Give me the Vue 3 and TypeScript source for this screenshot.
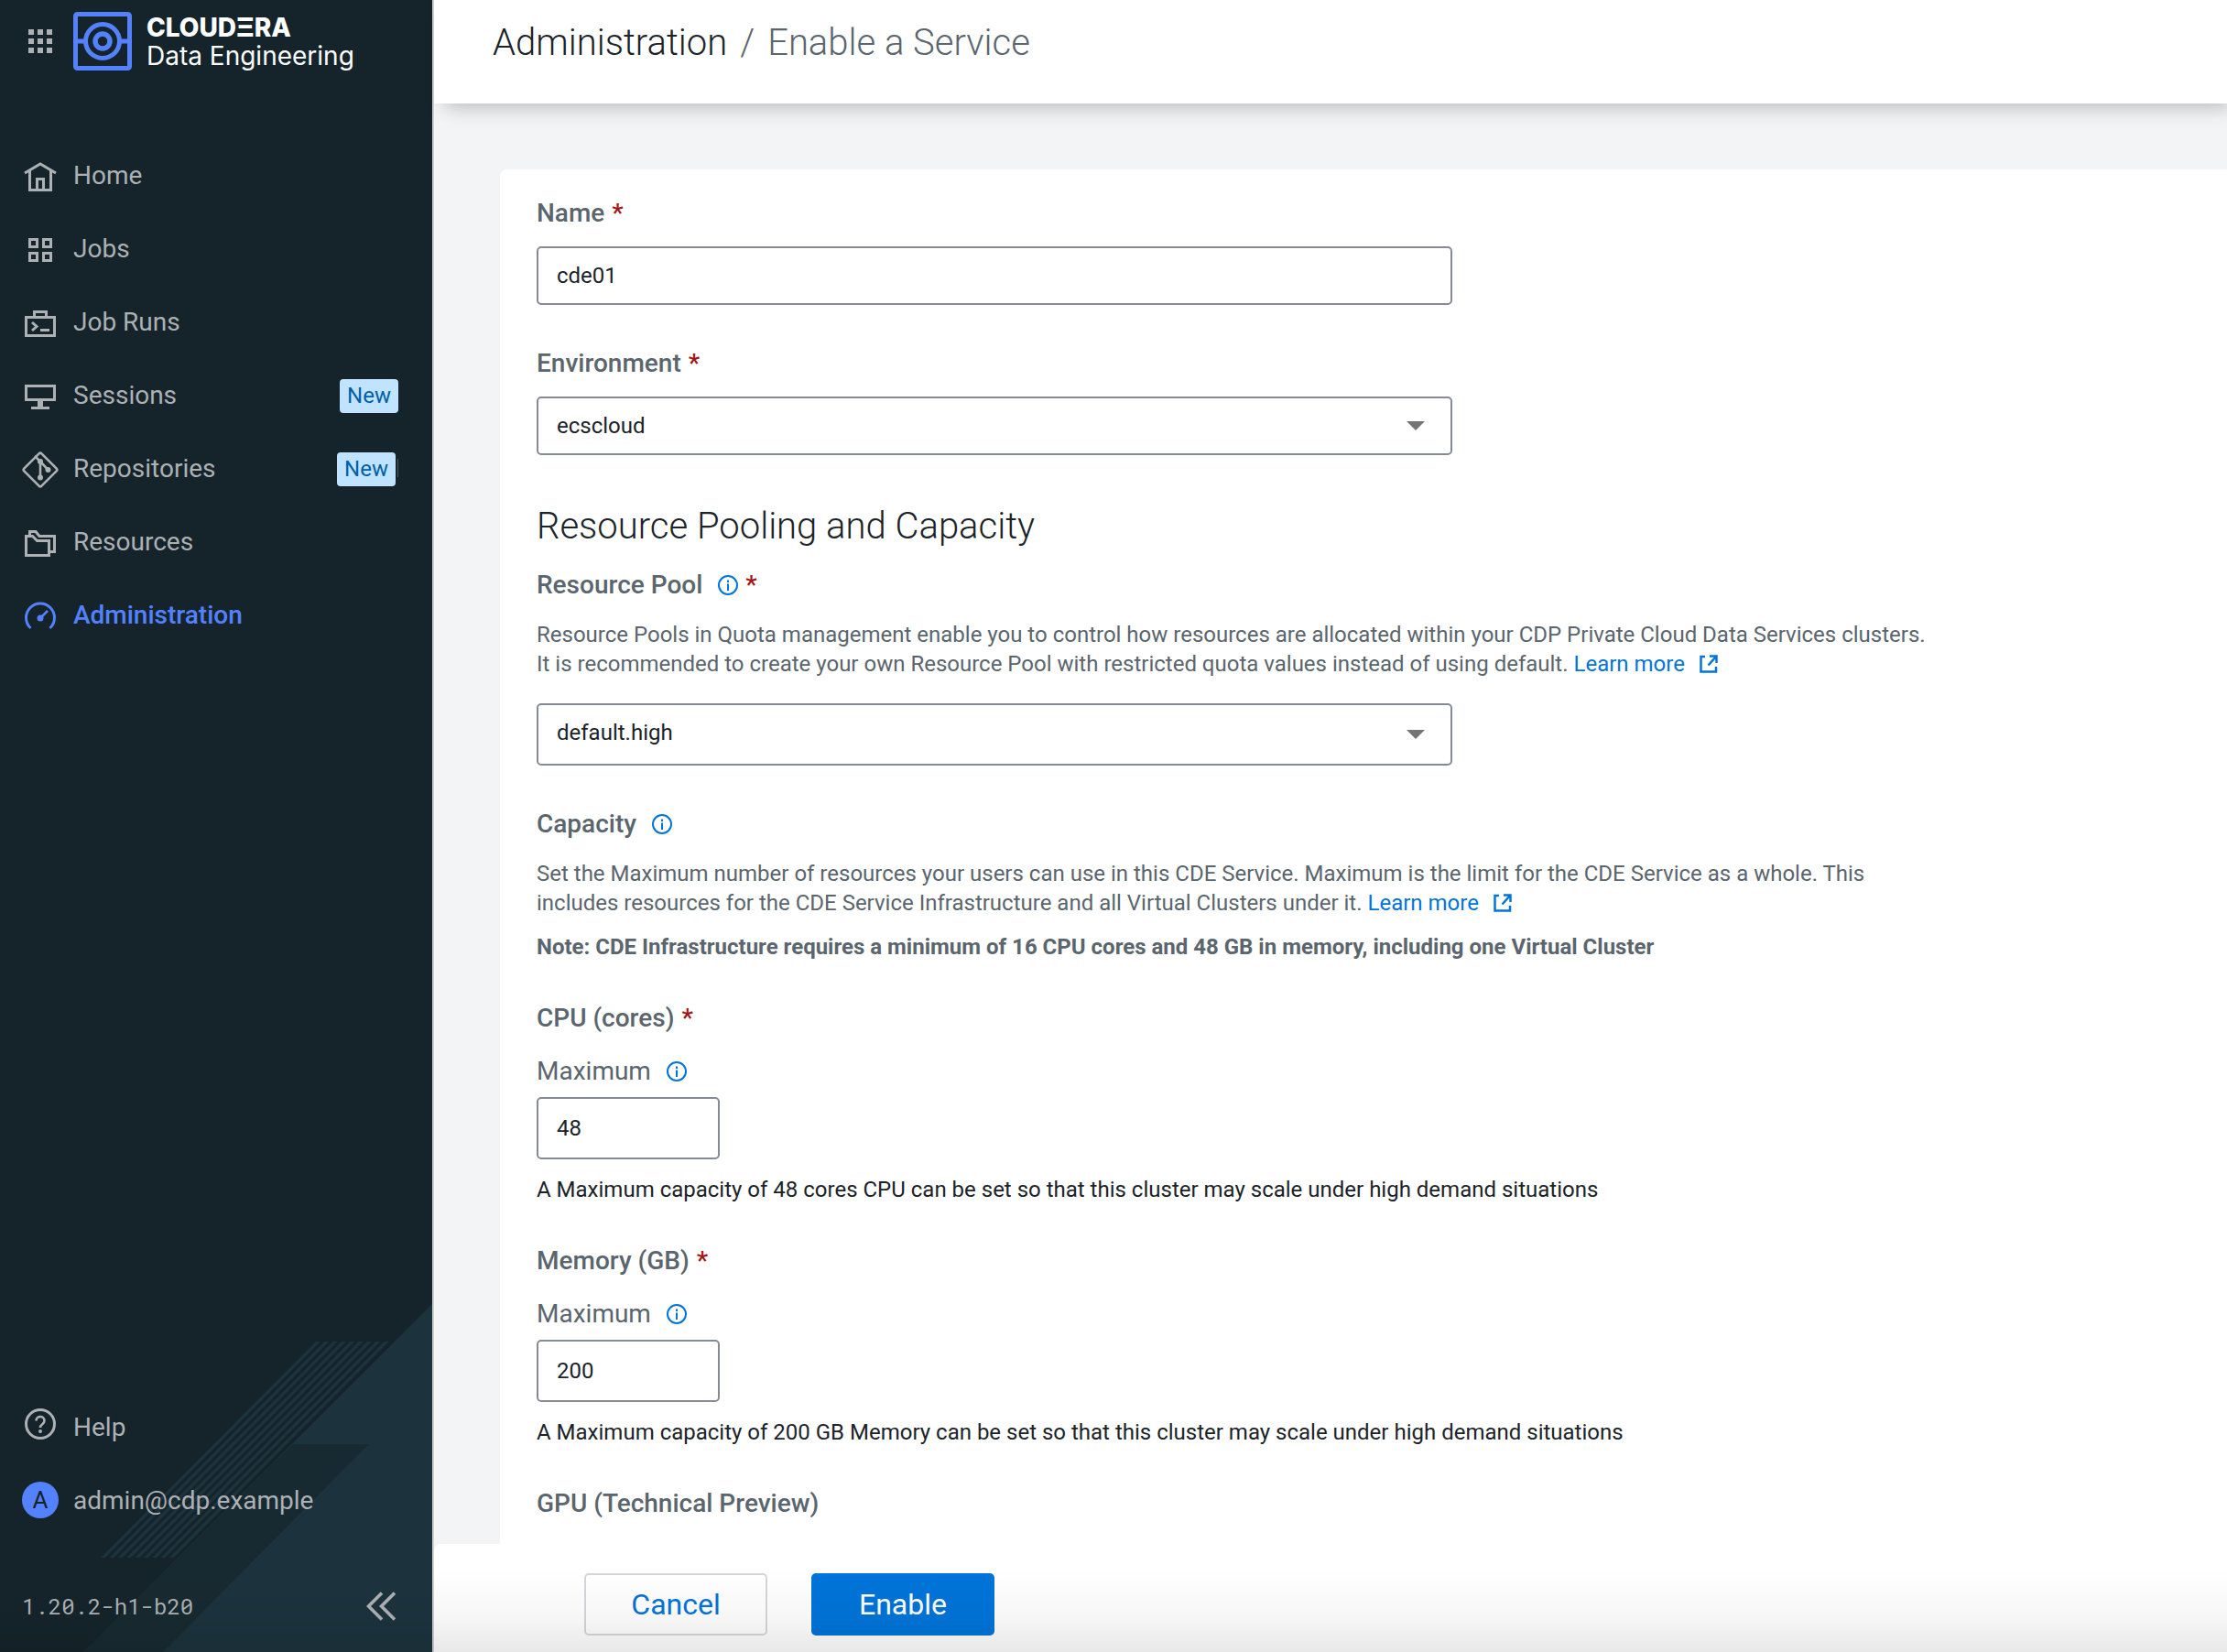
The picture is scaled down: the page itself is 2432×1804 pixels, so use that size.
<script setup lang="ts">
import { ref } from 'vue'

interface NavItem {
  label: string
  icon: string
  active?: boolean
  badge?: string
  marker?: boolean
}

const navItems: NavItem[] = [
  { label: 'Home', icon: 'home' },
  { label: 'Jobs', icon: 'jobs' },
  { label: 'Job Runs', icon: 'runs' },
  { label: 'Sessions', icon: 'sessions', badge: 'New' },
  { label: 'Repositories', icon: 'repos', badge: 'New', marker: true },
  { label: 'Resources', icon: 'resources' },
  { label: 'Administration', icon: 'admin', active: true },
]

const stripes = Array.from({ length: 9 }, (_, i) => {
  const top = 345 + (i * 28) / 3
  const bottom = top - 235
  return `${top},45 ${top + 5},45 ${bottom + 5},281 ${bottom},281`
})

const serviceName = ref('cde01')
const environment = ref('ecscloud')
const pool = ref('default.high')
const cpu = ref('48')
const memory = ref('200')
</script>

<template>
  <div class="shell">
    <aside class="sidebar">
      <svg class="backdrop" viewBox="0 0 472 384" aria-hidden="true">
        <polygon points="472,4 472,384 91,384" fill="#1c333d" />
        <polygon points="320,157 403,157 178,384 91,384" fill="#182a31" />
        <polygon v-for="s in stripes" :key="s" :points="s" fill="#1c333d" />
      </svg>

      <div class="brand">
        <button class="apps" type="button" aria-label="Applications">
          <svg width="40" height="40" viewBox="0 0 40 40" fill="#adb1b4">
            <path d="M7 7h6v6H7zM17 7h6v6h-6zM27 7h6v6h-6zM7 17h6v6H7zM17 17h6v6h-6zM27 17h6v6h-6zM7 27h6v6H7zM17 27h6v6h-6zM27 27h6v6h-6z" />
          </svg>
        </button>
        <svg class="logo" width="64" height="64" viewBox="0 0 64 64" fill="none" stroke="#5482ff" stroke-width="5">
          <rect x="2.5" y="2.5" width="59" height="59" rx="2" />
          <circle cx="32" cy="32" r="18.5" />
          <circle cx="32" cy="32" r="8" stroke-width="5.5" />
          <path d="M4 32h10M50 32h10" />
        </svg>
        <div class="brand-text">
          <span class="company">CLOUDΞRA</span>
          <span class="product">Data Engineering</span>
        </div>
      </div>

      <nav class="nav">
        <a v-for="item in navItems" :key="item.label" href="#" class="nav-item" :class="{ active: item.active }">
          <svg class="icon" width="40" height="44" viewBox="0 0 40 44" fill="none" stroke="currentColor" stroke-width="3">
            <template v-if="item.icon === 'home'">
              <path d="M3 20 20 10 37 20M8.500 17v21.500h23V17" />
              <path d="M16.500 38V26.500h7V38" />
            </template>
            <template v-else-if="item.icon === 'jobs'">
              <path d="M8.500 12.500h8v8h-8zM23.500 12.500h8v8h-8zM8.500 27.500h8v8h-8zM23.500 27.500h8v8h-8z" />
            </template>
            <template v-else-if="item.icon === 'runs'">
              <path d="M4.500 17.500h31v20h-31zM13.500 17v-5.500h13V17" />
              <path d="M11 23l5 4.500-5 4.500M20 31.500h10" />
            </template>
            <template v-else-if="item.icon === 'sessions'">
              <path d="M4.500 12.500h31v15h-31zM10 36.500h20" />
              <path d="M20 28v8" stroke-width="6" />
            </template>
            <template v-else-if="item.icon === 'repos'">
              <rect x="6.500" y="10.500" width="27" height="27" rx="2" transform="rotate(45 20 24)" stroke-width="2.600" />
              <path d="M14 9l6 6v18M20 15l8.500 9" stroke-width="2.600" />
              <circle cx="20" cy="15" r="3" fill="currentColor" stroke="none" />
              <circle cx="20" cy="32.500" r="3" fill="currentColor" stroke="none" />
              <circle cx="28.500" cy="24" r="3" fill="currentColor" stroke="none" />
            </template>
            <template v-else-if="item.icon === 'resources'">
              <path d="M4.500 16.500h7l5 5h13v16h-25z" />
              <path d="M8.500 17v-5.500h6.500l4 5h16.500v17h-5" />
            </template>
            <template v-else>
              <path d="M9.500 37a15.500 15.500 0 1 1 21 0" />
              <path d="M20 26l8-8" stroke-width="2.500" />
              <circle cx="20" cy="26" r="3.500" fill="currentColor" stroke="none" />
            </template>
          </svg>
          <span class="nav-label">{{ item.label }}</span>
          <span v-if="item.badge" class="badge">{{ item.badge }}</span>
          <span v-if="item.marker" class="marker"></span>
        </a>
      </nav>

      <div class="sidebar-foot">
        <a href="#" class="nav-item">
          <svg class="icon" width="40" height="44" viewBox="0 0 40 44" fill="none" stroke="currentColor" stroke-width="3">
            <circle cx="20" cy="19" r="15.500" />
            <path d="M15.500 15.500c0-6 9-6 9 0 0 4-4.500 3.500-4.500 7.500" stroke-width="2.600" />
            <circle cx="20" cy="27" r="2" fill="currentColor" stroke="none" />
          </svg>
          <span class="nav-label">Help</span>
        </a>
        <a href="#" class="nav-item">
          <span class="avatar">A</span>
          <span class="nav-label">admin@cdp.example</span>
        </a>
        <div class="version-row">
          <span class="version">1.20.2-h1-b20</span>
          <button class="collapse" type="button" aria-label="Collapse menu">
            <svg width="32" height="32" viewBox="0 0 32 32" fill="none" stroke="currentColor" stroke-width="3.600">
              <path d="M17 1.500 2.500 16 17 30.500M31 1.500 16.500 16 31 30.500" />
            </svg>
          </button>
        </div>
      </div>
    </aside>

    <div class="page">
      <header class="topbar">
        <nav class="crumbs" aria-label="Breadcrumb">
          <a href="#">Administration</a>
          <span>/</span>
          <span>Enable a Service</span>
        </nav>
      </header>

      <main class="content">
        <form id="service-form" class="card" @submit.prevent>
          <label class="label" for="name">Name <b class="req">*</b></label>
          <input id="name" v-model="serviceName" class="control" type="text" />

          <label class="label section" for="environment">Environment <b class="req">*</b></label>
          <div class="select">
            <select id="environment" v-model="environment" class="control">
              <option>ecscloud</option>
            </select>
            <svg class="arrow" width="20" height="10" viewBox="0 0 20 10"><path d="M0 0h20L10 10z" fill="#757575" /></svg>
          </div>

          <h2 class="heading">Resource Pooling and Capacity</h2>

          <label class="label" for="pool">
            Resource Pool
            <svg class="info" width="22" height="22" viewBox="0 0 22 22"><circle cx="11" cy="11" r="10" /><path d="M11 9.500V17M11 5.500V8" /></svg>
            <b class="req">*</b>
          </label>
          <p class="text">
            Resource Pools in Quota management enable you to control how resources are allocated within your CDP Private Cloud Data Services clusters.
            It is recommended to create your own Resource Pool with restricted quota values instead of using default.
            <a href="#" class="more">Learn more<svg class="ext" width="20" height="20" viewBox="0 0 20 20"><path d="M6 2H1.500v16.500H18V13M11 1.500h7.500V9M18 2 9.500 11.500" /></svg></a>
          </p>
          <div class="select pool">
            <select id="pool" v-model="pool" class="control tall">
              <option>default.high</option>
            </select>
            <svg class="arrow" width="20" height="10" viewBox="0 0 20 10"><path d="M0 0h20L10 10z" fill="#757575" /></svg>
          </div>

          <h3 class="label section">
            Capacity
            <svg class="info" width="22" height="22" viewBox="0 0 22 22"><circle cx="11" cy="11" r="10" /><path d="M11 9.500V17M11 5.500V8" /></svg>
          </h3>
          <p class="text">
            Set the Maximum number of resources your users can use in this CDE Service. Maximum is the limit for the CDE Service as a whole. This
            includes resources for the CDE Service Infrastructure and all Virtual Clusters under it.
            <a href="#" class="more">Learn more<svg class="ext" width="20" height="20" viewBox="0 0 20 20"><path d="M6 2H1.500v16.500H18V13M11 1.500h7.500V9M18 2 9.500 11.500" /></svg></a>
          </p>
          <p class="note">Note: CDE Infrastructure requires a minimum of 16 CPU cores and 48 GB in memory, including one Virtual Cluster</p>

          <h3 class="label next">CPU (cores) <b class="req">*</b></h3>
          <label class="label sub" for="cpu">
            Maximum
            <svg class="info" width="22" height="22" viewBox="0 0 22 22"><circle cx="11" cy="11" r="10" /><path d="M11 9.500V17M11 5.500V8" /></svg>
          </label>
          <input id="cpu" v-model="cpu" class="control tall small" type="text" />
          <p class="hint">A Maximum capacity of 48 cores CPU can be set so that this cluster may scale under high demand situations</p>

          <h3 class="label next">Memory (GB) <b class="req">*</b></h3>
          <label class="label sub" for="memory">
            Maximum
            <svg class="info" width="22" height="22" viewBox="0 0 22 22"><circle cx="11" cy="11" r="10" /><path d="M11 9.500V17M11 5.500V8" /></svg>
          </label>
          <input id="memory" v-model="memory" class="control tall small" type="text" />
          <p class="hint">A Maximum capacity of 200 GB Memory can be set so that this cluster may scale under high demand situations</p>

          <h3 class="label next">GPU (Technical Preview)</h3>
        </form>
      </main>

      <footer class="actions">
        <button type="button" class="btn">Cancel</button>
        <button type="submit" form="service-form" class="btn primary">Enable</button>
      </footer>
    </div>
    <div class="fade" aria-hidden="true"></div>
  </div>
</template>

<style>
body {
  margin: 0;
  background: #f3f4f6;
}
</style>

<style scoped>
.shell {
  position: relative;
  display: flex;
  height: 100vh;
  overflow: hidden;
  font-family: Roboto, "Liberation Sans", sans-serif;
  font-size: 24px;
  line-height: 32px;
  color: #1b2329;
}
.shell * {
  box-sizing: border-box;
}
a {
  color: inherit;
  text-decoration: none;
}
button {
  padding: 0;
  border: 0;
  background: none;
  font: inherit;
  color: inherit;
  cursor: pointer;
}
svg {
  flex: none;
}

/* Sidebar */
.sidebar {
  position: relative;
  flex: none;
  display: flex;
  flex-direction: column;
  width: 474px;
  border-right: 2px solid #cdd0d1;
  background: #15242b;
  color: #adb1b4;
}
.backdrop {
  position: absolute;
  left: 0;
  bottom: 0;
  width: 100%;
}
.brand {
  position: relative;
  display: flex;
  align-items: center;
  gap: 16px;
  height: 90px;
  padding-left: 24px;
}
.apps {
  height: 40px;
}
.brand-text {
  display: flex;
  flex-direction: column;
  color: #fff;
  font-family: Inter, sans-serif;
  font-size: 28px;
  white-space: nowrap;
}
.company {
  font-weight: 800;
  line-height: 32px;
}
.product {
  line-height: 30px;
}
.nav {
  position: relative;
  margin-top: 61px;
}
.nav-item {
  display: flex;
  align-items: center;
  gap: 16px;
  height: 80px;
  padding: 0 37px 0 24px;
  font-size: 28px;
}
.nav-item.active {
  color: #5482ff;
  font-weight: 500;
}
.nav-label {
  flex: 1;
  padding-top: 2px;
}
.badge {
  margin-top: 2px;
  padding: 0 8px;
  border-radius: 4px;
  background: #c0e3ff;
  color: #005fa8;
  font-size: 24px;
  line-height: 37px;
}
.marker {
  width: 1px;
  height: 20px;
  margin-left: -14px;
  background: #4a565c;
}
.sidebar-foot {
  position: relative;
  margin-top: auto;
}
.avatar {
  width: 40px;
  height: 40px;
  border-radius: 50%;
  background: #5482ff;
  color: #15242b;
  font-size: 26px;
  line-height: 40px;
  text-align: center;
}
.version-row {
  display: flex;
  align-items: center;
  justify-content: space-between;
  height: 100px;
  margin-top: 26px;
  padding: 0 40px 0 24px;
}
.version {
  font-family: "Roboto Mono", "Liberation Mono", monospace;
}
.collapse {
  height: 32px;
}

/* Page */
.page {
  flex: 1;
  display: flex;
  flex-direction: column;
  min-width: 0;
  background: #f3f4f6;
}
.topbar {
  position: relative;
  flex: none;
  height: 113px;
  padding: 23px 64px;
  background: #fff;
  box-shadow: 8px 8px 20px -4px rgba(0, 0, 0, 0.24);
}
.crumbs {
  display: flex;
  gap: 14px;
  font-size: 40px;
  font-weight: 300;
  line-height: 48px;
  color: #5a656d;
}
.crumbs a {
  color: #1b2329;
}
.content {
  flex: 1;
  min-height: 0;
  overflow: hidden;
  padding: 72px 0 0 72px;
}
.card {
  display: flex;
  flex-direction: column;
  align-items: flex-start;
  min-height: 100%;
  padding: 32px 40px 0;
  border-radius: 8px 0 0 0;
  background: #fff;
}
.label {
  display: flex;
  align-items: center;
  margin: 0;
  color: #5a656d;
  font-size: 28px;
  font-weight: 500;
  line-height: 32px;
}
.label.next {
  margin-top: 46px;
}
.label.section {
  margin-top: 48px;
}
.label.sub {
  margin-top: 26px;
  font-weight: 400;
}
.req {
  margin-left: 8px;
  color: #a31515;
  font-weight: 500;
}
.info {
  margin-left: 17px;
  fill: none;
  stroke: #0074d9;
  stroke-width: 2;
}
.control {
  width: 100%;
  max-width: 1000px;
  height: 64px;
  margin: 20px 0 0;
  padding: 0 20px;
  border: 2px solid #858a95;
  border-radius: 5px;
  background: #fff;
  color: #1b2329;
  font: inherit;
  appearance: none;
}
.control.tall {
  height: 68px;
}
.control.small {
  width: 200px;
  margin-top: 12px;
}
.select {
  position: relative;
  width: 100%;
  max-width: 1000px;
  margin-top: 20px;
}
.select.pool {
  margin-top: 27px;
}
.select .control {
  display: block;
  margin: 0;
}
.select .tall {
  padding-bottom: 4px;
}
.arrow {
  position: absolute;
  right: 30px;
  top: 50%;
  margin-top: -5px;
  pointer-events: none;
}
.heading {
  margin: 54px 0 24px;
  font-size: 40px;
  font-weight: 300;
  line-height: 48px;
}
.text {
  max-width: 1530px;
  margin: 22px 0 0;
  color: #5a656d;
}
.more {
  color: #0074d9;
  white-space: nowrap;
}
.ext {
  margin-left: 16px;
  vertical-align: -2px;
  fill: none;
  stroke: currentColor;
  stroke-width: 2.5;
}
.note {
  margin: 16px 0 0;
  color: #5a656d;
  font-weight: 700;
}
.hint {
  margin: 17px 0 0;
}
.actions {
  flex: none;
  display: flex;
  gap: 48px;
  height: 118px;
  padding: 32px 164px 0;
  border-top-left-radius: 8px;
  background: #fff;
}
.btn {
  width: 200px;
  height: 68px;
  border: 2px solid #d5d6d9;
  border-radius: 5px;
  background: #fff;
  color: #0074d9;
  font-size: 32px;
}
.btn.primary {
  border-color: #0074d9;
  background: #0074d9;
  color: #fff;
}
.fade {
  position: absolute;
  left: 0;
  right: 0;
  bottom: 0;
  height: 90px;
  background: linear-gradient(to bottom, transparent, rgba(0, 0, 0, 0.03) 55%, rgba(0, 0, 0, 0.09));
  pointer-events: none;
}
</style>
